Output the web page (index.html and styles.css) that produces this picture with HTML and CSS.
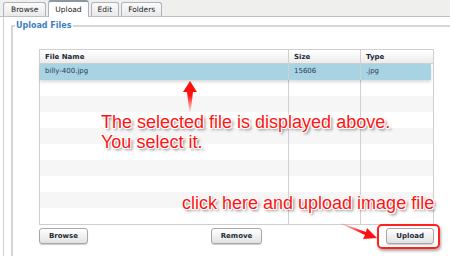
FILE: index.html
```html
<!DOCTYPE html>
<html lang="en">
<head>
    <meta charset="UTF-8">
    <title>Upload Files</title>
    <link rel="stylesheet" href="styles.css">
</head>
<body>
    <div class="page">
        <!-- tabs -->
        <div class="tabs">
            <div class="tab t-browse">Browse</div>
            <div class="tab active">Upload</div>
            <div class="tab">Edit</div>
            <div class="tab">Folders</div>
        </div>
        <div class="panel">
            <fieldset class="upload-set">
                <legend>Upload Files</legend>
                <div class="set-body">
                    <div class="grid">
                        <div class="row head">
                            <div class="cell c-name">File Name</div>
                            <div class="cell c-size">Size</div>
                            <div class="cell c-type">Type</div>
                        </div>
                        <div class="row selected">
                            <div class="cell c-name">billy-400.jpg</div>
                            <div class="cell c-size">15606</div>
                            <div class="cell c-type">.jpg</div>
                        </div>
                        <div class="row"><div class="cell c-name"></div><div class="cell c-size"></div><div class="cell c-type"></div></div>
                        <div class="row alt"><div class="cell c-name"></div><div class="cell c-size"></div><div class="cell c-type"></div></div>
                        <div class="row"><div class="cell c-name"></div><div class="cell c-size"></div><div class="cell c-type"></div></div>
                        <div class="row alt"><div class="cell c-name"></div><div class="cell c-size"></div><div class="cell c-type"></div></div>
                        <div class="row"><div class="cell c-name"></div><div class="cell c-size"></div><div class="cell c-type"></div></div>
                        <div class="row alt"><div class="cell c-name"></div><div class="cell c-size"></div><div class="cell c-type"></div></div>
                        <div class="row"><div class="cell c-name"></div><div class="cell c-size"></div><div class="cell c-type"></div></div>
                        <div class="row alt"><div class="cell c-name"></div><div class="cell c-size"></div><div class="cell c-type"></div></div>
                        <div class="row"><div class="cell c-name"></div><div class="cell c-size"></div><div class="cell c-type"></div></div>
                    </div>
                    <div class="buttons">
                        <button class="btn b-left">Browse</button>
                        <button class="btn">Remove</button>
                        <span class="highlight"><button class="btn">Upload</button></span>
                    </div>
                </div>
            </fieldset>
        </div>

        <!-- annotations -->
        <svg class="arrow-up" width="20" height="34" viewBox="0 0 20 34">
            <defs>
                <linearGradient id="fadeUp" x1="0" y1="0" x2="0" y2="1">
                    <stop offset="0" stop-color="#ff1010"/>
                    <stop offset="0.45" stop-color="#ff1010"/>
                    <stop offset="1" stop-color="#ff1010" stop-opacity="0"/>
                </linearGradient>
            </defs>
            <path d="M10 1 L17 12 L13 12 L10.5 33 L9.5 33 L7 12 L3 12 Z" fill="url(#fadeUp)"/>
        </svg>
        <div class="note note-top">The selected file is displayed above.<br>You select it.</div>
        <div class="note note-bottom">click here and upload image file</div>
        <svg class="arrow-side" width="40" height="22" viewBox="0 0 40 22">
            <defs>
                <linearGradient id="fadeSide" x1="0" y1="0" x2="1" y2="0">
                    <stop offset="0" stop-color="#ff1010" stop-opacity="0.1"/>
                    <stop offset="0.6" stop-color="#ff1010"/>
                </linearGradient>
            </defs>
            <path d="M1 2 L26 11 L27 7 L37 17 L23 18 L25 14 L1 3 Z" fill="url(#fadeSide)"/>
        </svg>
    </div>
</body>
</html>
```

FILE: styles.css
```css
html,
body {
    padding: 0;
    margin: 0;
}

.page {
    position: relative;
    width: 450px;
    height: 256px;
    overflow: hidden;
    background: #fff;
    font-family: "DejaVu Sans", Verdana, sans-serif;
}

/* tabs */
.tabs {
    display: flex;
    align-items: flex-end;
    gap: 2px;
    height: 16px;
    padding-left: 3px;
    background: #efefed;
    border-bottom: 1px solid #b9c1c6;
}

.tab {
    height: 13px;
    padding: 0 6px;
    font-size: 7.5px;
    line-height: 13px;
    color: #222;
    background: linear-gradient(#fbfbfb, #e9e9e9);
    border: 1px solid #aab4ba;
    border-bottom: none;
    border-radius: 3px 3px 0 0;
}

.t-browse {
    padding: 0 7px;
}

.tab.active {
    height: 15px;
    line-height: 16px;
    margin-bottom: -1px;
    background: #fff;
    border-top: 2px solid #8a98a2;
}

/* panel */
.panel {
    margin-left: 3px;
    border-left: 1px solid #cdd0d0;
    padding: 4px 0 0 7px;
    height: 240px;
}

.upload-set {
    margin: 0;
    padding: 0;
    border: 0;
    border-top: 2px solid #d6d6d6;
    border-left: 2px solid #d6d6d6;
    height: 236px;
    min-width: 0;
}

.upload-set legend {
    padding: 0 1px;
    margin-left: 2px;
    font-size: 8px;
    font-weight: bold;
    color: #3d7fc4;
}

.set-body {
    padding: 19px 0 0 26px;
}

/* file grid */
.grid {
    width: 393px;
    border: 1px solid #cfcfcf;
}

.row {
    display: flex;
    height: 16px;
    background: #fff;
}

.row.alt {
    background: #f6f6f6;
}

.row.head {
    height: 13px;
    background: linear-gradient(#ffffff, #ececec);
    border-bottom: 1px solid #cfcfcf;
}

.row.selected {
    background: #a7d3e3;
    box-shadow: 0 2px 3px rgba(0, 0, 0, 0.15);
    margin-right: 2px;
    position: relative;
}

.cell {
    font-size: 7px;
    line-height: 15px;
    color: #2b3e52;
    padding-left: 5px;
    box-sizing: border-box;
}

.head .cell {
    font-weight: bold;
    line-height: 14px;
    color: #1e2a38;
}

.c-name {
    width: 249px;
    border-right: 1px solid #d0d0d0;
}

.c-size {
    width: 72px;
    border-right: 1px solid #d0d0d0;
}

.c-type {
    flex: 1;
}

/* buttons */
.buttons {
    display: grid;
    grid-template-columns: 1fr auto 1fr;
    align-items: center;
    width: 395px;
    margin-top: 3px;
}

.b-left {
    justify-self: start;
}

.btn {
    height: 16px;
    padding: 0 9px;
    font-family: "DejaVu Sans", Verdana, sans-serif;
    font-size: 7px;
    font-weight: bold;
    color: #1f2d3a;
    background: linear-gradient(#ffffff, #e2e2e2);
    border: 1px solid #a7a7a7;
    border-radius: 3px;
    box-shadow: 0 1px 1px rgba(0, 0, 0, 0.2);
}

.highlight {
    justify-self: end;
    display: flex;
    margin: -4px -6px -5px -9px;
    padding: 2px 4px 3px 7px;
    border: 2px solid #ff2020;
    border-radius: 5px;
    box-shadow: 1px 2px 3px rgba(0, 0, 0, 0.35);
}

/* red notes over the page */
.note {
    position: absolute;
    font-family: "Liberation Sans", Arial, sans-serif;
    font-size: 18px;
    line-height: 20px;
    color: #ff1414;
    text-shadow: -1px -1px 0 #fff, 1px -1px 0 #fff, -1px 1px 0 #fff, 1px 1px 0 #fff, 2px 2px 3px rgba(0, 0, 0, 0.6);
}

.note-top {
    left: 101px;
    top: 112px;
}

.note-bottom {
    left: 182px;
    top: 193px;
}

.arrow-up {
    position: absolute;
    left: 180px;
    top: 80px;
}

.arrow-side {
    position: absolute;
    left: 340px;
    top: 221px;
}
```
